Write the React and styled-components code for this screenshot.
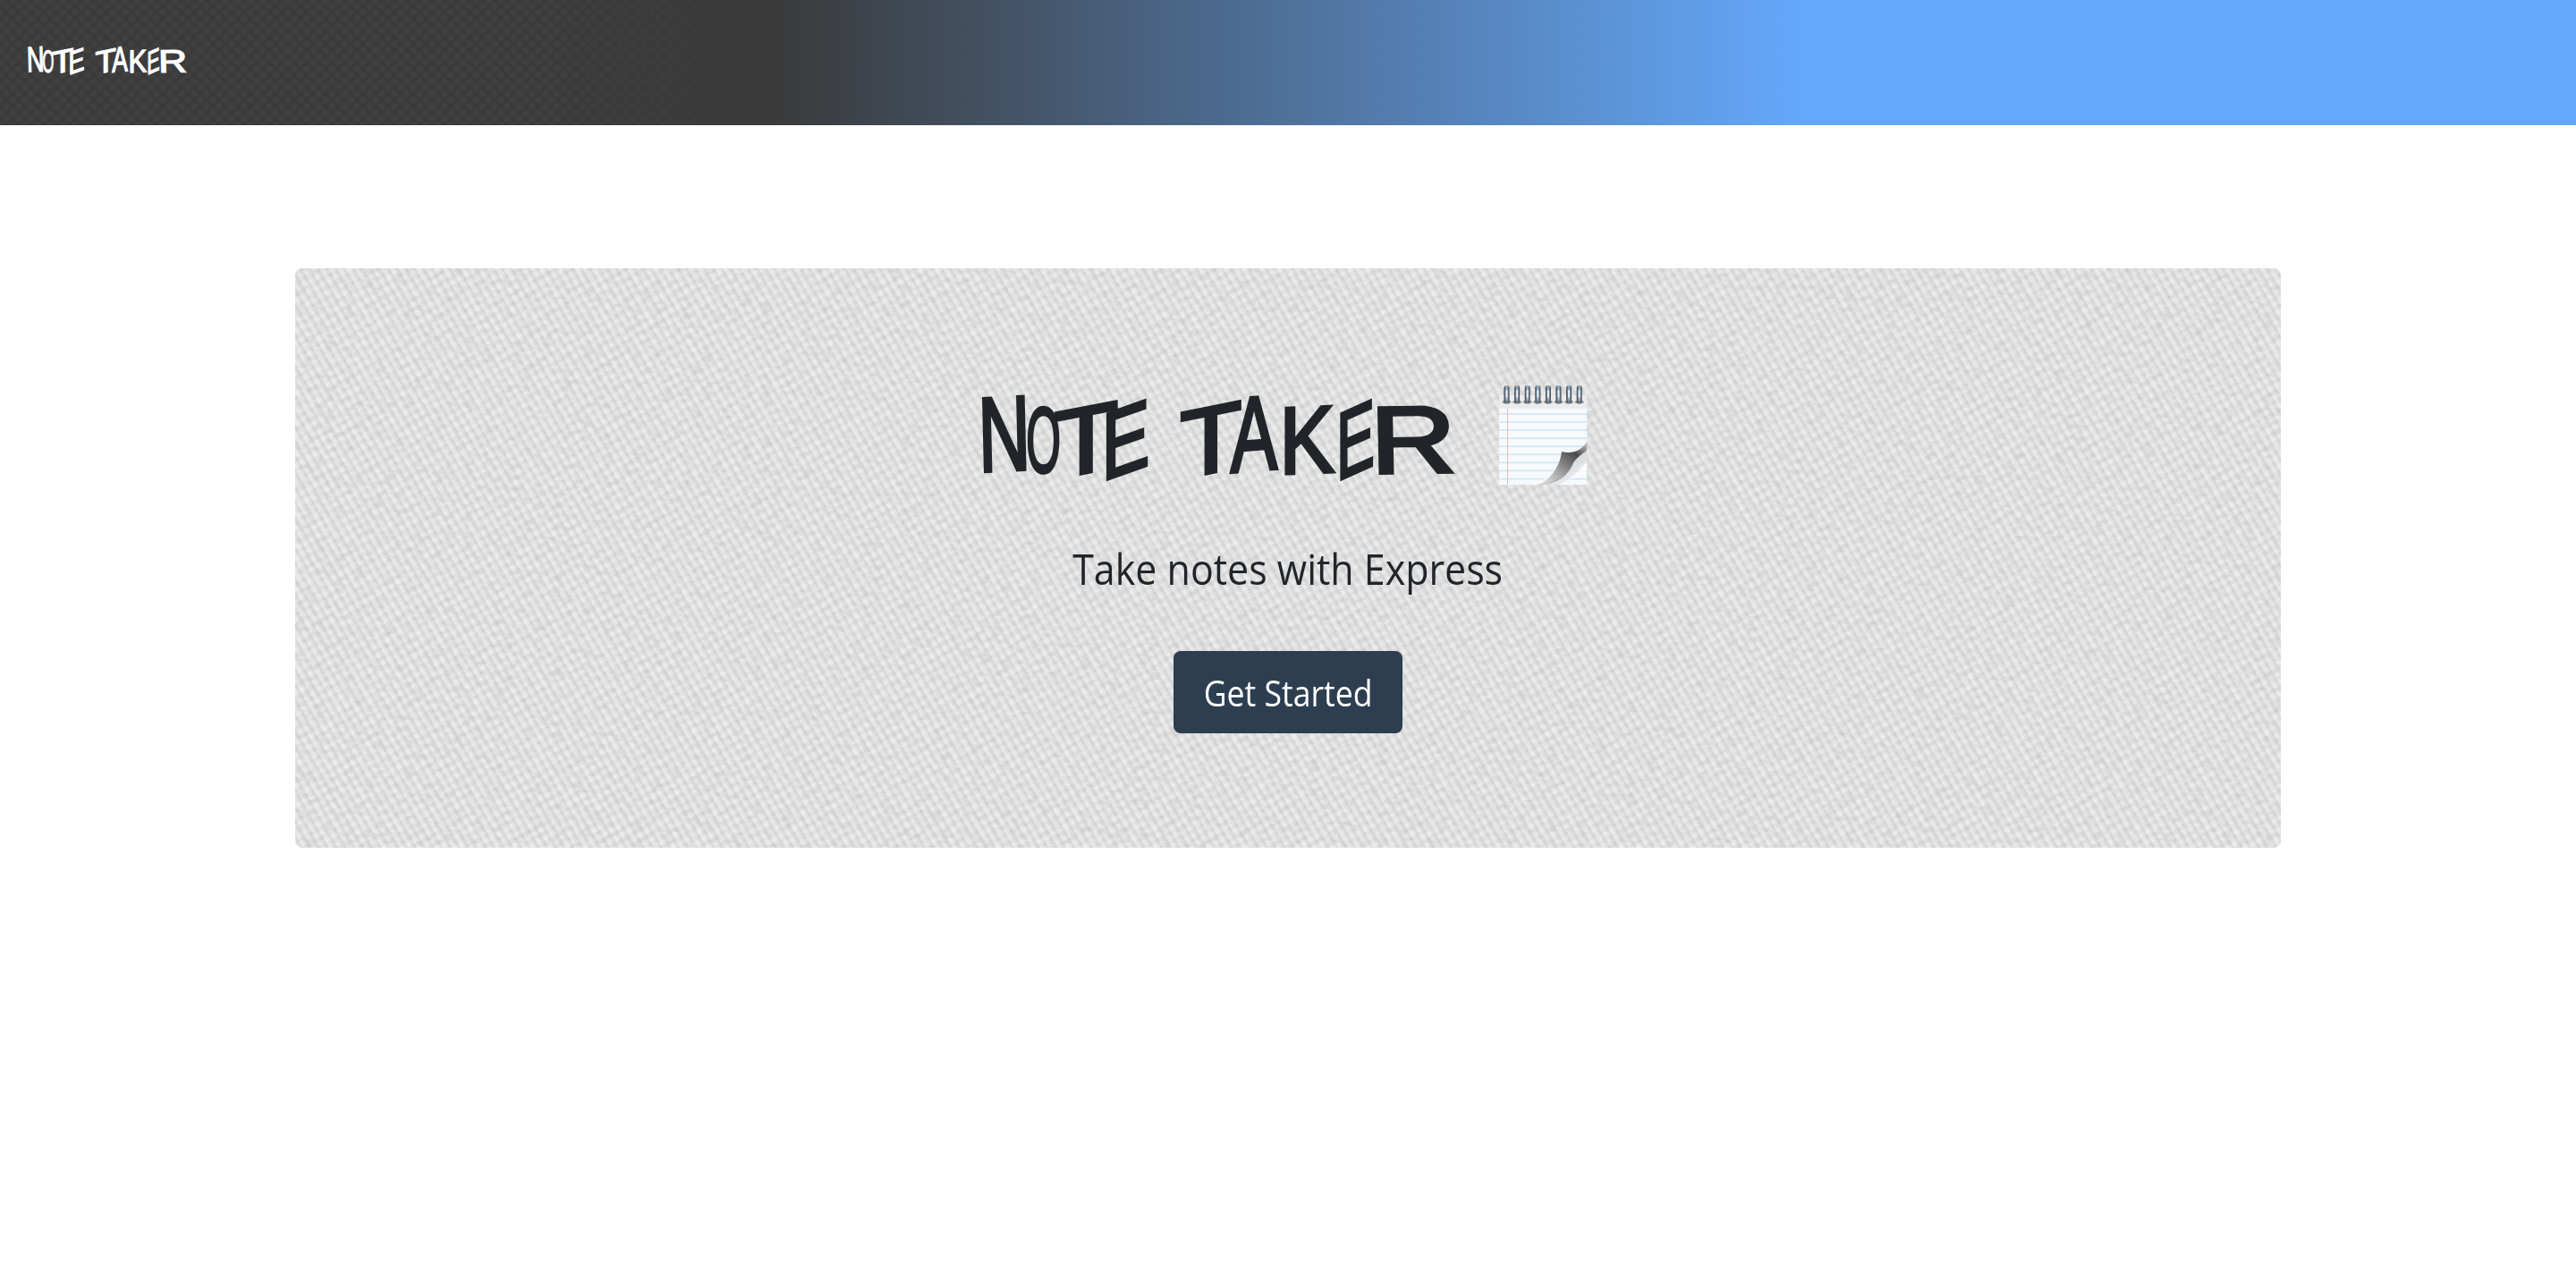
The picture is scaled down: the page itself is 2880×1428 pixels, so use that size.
import React from "react";
import styled, { createGlobalStyle } from "styled-components";

const Global = createGlobalStyle`
  html, body { margin: 0; padding: 0; background: #fff; }
  body { font-family: "Open Sans", "Noto Sans", sans-serif; color: #212529; min-height: 1428px; }
`;

const speckle = encodeURIComponent(
  `<svg xmlns="http://www.w3.org/2000/svg" width="2220" height="648"><filter id="n" x="0" y="0" width="100%" height="100%"><feTurbulence type="fractalNoise" baseFrequency="0.09 0.16" numOctaves="3" seed="7"/><feColorMatrix values="0 0 0 0 0.5  0 0 0 0 0.5  0 0 0 0 0.5  0.9 0 0 0 -0.38"/></filter><rect width="2220" height="648" filter="url(#n)"/></svg>`
);

const NavBar = styled.header`
  position: relative;
  height: 140px;
  display: flex;
  align-items: center;
  padding: 0 0 8px 32px;
  box-sizing: border-box;
  background: linear-gradient(to right, #3a3a3a 30%, #64a8fb 70%);
  &::before {
    content: "";
    position: absolute;
    inset: 0;
    background:
      radial-gradient(circle at 50% 50%, rgba(255,255,255,.035) 0 3px, rgba(255,255,255,0) 5px) 0 0 / 14px 14px,
      radial-gradient(circle at 50% 50%, rgba(255,255,255,.035) 0 3px, rgba(255,255,255,0) 5px) 7px 7px / 14px 14px;
    -webkit-mask-image: linear-gradient(to right, #000 20%, transparent 30%);
    mask-image: linear-gradient(to right, #000 20%, transparent 30%);
  }
`;

const Main = styled.main`
  display: flex;
  justify-content: center;
  padding-top: 160px;
`;

const Hero = styled.section`
  width: 2220px;
  height: 648px;
  box-sizing: border-box;
  padding-top: 130px;
  border-radius: 8px;
  display: flex;
  flex-direction: column;
  align-items: center;
  background-color: #e1e1e1;
  background-image:
    url("data:image/svg+xml,${speckle}"),
    repeating-linear-gradient(150deg, rgba(255,255,255,.12) 0 3px, rgba(0,0,0,.02) 5px 7px, rgba(255,255,255,.12) 10px),
    repeating-linear-gradient(60deg, rgba(255,255,255,.3) 0 2px, rgba(255,255,255,0) 4px, rgba(0,0,0,.055) 6px, rgba(255,255,255,.3) 8.5px);
`;

const TitleRow = styled.div`
  display: flex;
  align-items: flex-start;
  height: 112px;
  padding-right: 6px;
`;

const MarkerWord = styled.span`
  display: flex;
  font-family: "Liberation Sans Narrow", "Liberation Sans", sans-serif;
  font-weight: 400;
  -webkit-text-stroke: 0.035em currentColor;
`;

const Headline = styled(MarkerWord).attrs({ as: "h1" })`
  margin: 12px 54px 0 0;
  width: 522px;
  height: 86px;
  font-size: 118px;
  line-height: 86px;
  color: #212529;
`;

const Brand = styled(MarkerWord).attrs({ as: "a" })`
  position: relative;
  width: 176px;
  height: 28px;
  font-size: 39.8px;
  line-height: 29px;
  color: #fff;
`;

const Letter = styled.span`
  display: flex;
  justify-content: center;
  flex: none;
  width: ${(p) => p.$w}%;
  transform: translateY(${(p) => p.$y}em) scale(${(p) => p.$sx}, ${(p) => p.$sy}) skewY(${(p) => p.$k}deg) rotate(${(p) => p.$r}deg);
  transform-origin: 50% 60%;
`;

const Subtitle = styled.p`
  margin: 65px 0 0;
  font-size: 48px;
  line-height: 58px;
  white-space: nowrap;
  transform: scaleX(0.895);
  color: #212529;
`;

const CTA = styled.a`
  margin-top: 63px;
  width: 256px;
  height: 92px;
  border-radius: 8px;
  background: #2d3e50;
  color: #fff;
  display: flex;
  align-items: center;
  justify-content: center;
  font-size: 40px;
`;

const CTALabel = styled.span`
  display: block;
  white-space: nowrap;
  transform: scaleX(0.89);
`;

/* char, width %, scaleX, scaleY, skewY, rotate, translateY */
const letters = [
  ["N", 8.8, 0.68, 1.0, 0, -2, 0],
  ["O", 7.9, 0.42, 0.88, 0, 1, 0.05],
  ["T", 10.5, 1.0, 0.9, -12, 0, 0.05],
  ["E", 6.3, 0.68, 0.9, -15, 0, 0.05],
  [" ", 10, 1, 1, 0, 0, 0],
  ["T", 10.3, 0.96, 0.9, -12, 0, 0.05],
  ["A", 8, 0.66, 1.0, -3, 0, 0],
  ["K", 14.6, 0.78, 0.9, -2, 0, 0.05],
  ["E", 6.3, 0.54, 0.9, -15, 0, 0.05],
  ["R", 18.4, 1.12, 0.9, 0, -1, 0.05],
];

const Marker = () =>
  letters.map(([c, w, sx, sy, k, r, y], i) => (
    <Letter key={i} $w={w} $sx={sx} $sy={sy} $k={k} $r={r} $y={y}>
      {c === " " ? "\u00a0" : c}
    </Letter>
  ));

const Notepad = () => (
  <svg width="98" height="112" viewBox="0 0 98 112">
    <defs>
      <linearGradient id="ring" x1="0" x2="1" y1="0" y2="0">
        <stop offset="0" stopColor="#333a42" />
        <stop offset=".5" stopColor="#a9bfd4" />
        <stop offset="1" stopColor="#3a4047" />
      </linearGradient>
      <linearGradient id="curl" x1="0" y1="1" x2="1" y2="0">
        <stop offset="0" stopColor="#f5f5f5" />
        <stop offset=".4" stopColor="#a0a0a0" />
        <stop offset=".75" stopColor="#4a4a4a" />
        <stop offset="1" stopColor="#c9c9c9" />
      </linearGradient>
      <linearGradient id="shade" x1="0" y1="0" x2="1" y2="1">
        <stop offset="0" stopColor="#000" stopOpacity=".5" />
        <stop offset="1" stopColor="#000" stopOpacity="0" />
      </linearGradient>
    </defs>
    <rect x="0" y="12" width="98" height="16" fill="#ececec" />
    <rect x="0" y="27" width="98" height="85" fill="#f6fafd" />
    {Array.from({ length: 10 }, (_, i) => (
      <rect key={i} x="0" y={32 + i * 9.1} width="98" height="1.6" fill="#d2e3f2" />
    ))}
    <rect x="9" y="27" width="1" height="85" fill="#eab9bd" />
    {Array.from({ length: 8 }, (_, i) => (
      <g key={i}>
        <rect x={5.5 + i * 11.6} y="1" width="6" height="21" rx="3" fill="url(#ring)" />
        <rect x={7.5 + i * 11.6} y="6" width="2" height="9" rx="1" fill="#e7eff6" />
        <rect x={3.5 + i * 11.6} y="18" width="10" height="3" rx="1.5" fill="#55595e" opacity=".55" />
      </g>
    ))}
    <path d="M30 112 C58 108 66 92 71 76 C80 80 90 76 98 66 L98 100 L60 112 Z" fill="#fbfdff" opacity=".8" />
    <path d="M98 64 C92 74 82 78 70 75 C68 92 56 110 40 112 C60 114 76 104 82 90 C84 84 92 78 98 74 Z" fill="url(#curl)" />
    <path d="M40 112 C62 110 76 104 82 90 C84 84 92 78 98 74 L98 86 C92 92 86 104 66 112 Z" fill="url(#shade)" opacity=".55" />
  </svg>
);

export default function App() {
  return (
    <>
      <Global />
      <NavBar>
        <Brand><Marker /></Brand>
      </NavBar>
      <Main>
        <Hero>
          <TitleRow>
            <Headline><Marker /></Headline>
            <Notepad />
          </TitleRow>
          <Subtitle>Take notes with Express</Subtitle>
          <CTA><CTALabel>Get Started</CTALabel></CTA>
        </Hero>
      </Main>
    </>
  );
}
